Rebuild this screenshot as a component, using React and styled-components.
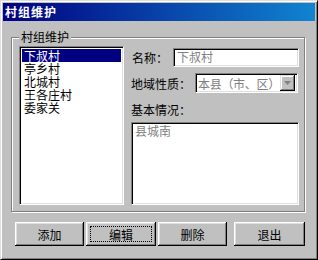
import React from "react";
import styled, { createGlobalStyle, css } from "styled-components";

const Global = createGlobalStyle`
  html, body { margin: 0; padding: 0; background: #c0c0c0; }
  * { box-sizing: border-box; }
  body { font-family: "Noto Sans CJK SC", "Noto Sans", sans-serif; font-size: 12px; }
`;

const sunken = css`
  border: 1px solid;
  border-color: #808080 #ffffff #ffffff #808080;
  box-shadow: inset 1px 1px 0 #000000, inset -1px -1px 0 #dfdfdf;
`;

const Window = styled.div`
  width: 318px;
  height: 260px;
  background: #c0c0c0;
  border: 1px solid;
  border-color: #dfdfdf #000000 #000000 #dfdfdf;
  box-shadow: inset 1px 1px 0 #ffffff, inset -1px -1px 0 #808080;
  padding: 2px;
  display: flex;
  flex-direction: column;
`;

const TitleBar = styled.div`
  height: 18px;
  background: linear-gradient(90deg, #000080 0%, #1084d0 100%);
  color: #ffffff;
  font-weight: bold;
  font-size: 12px;
  letter-spacing: 1px;
  line-height: 18px;
  padding-left: 2px;
  white-space: nowrap;
`;

const Body = styled.div`
  display: flex;
  flex-direction: column;
  padding: 16px 10px 0 8px;
`;

const GroupBox = styled.div`
  position: relative;
  width: 294px;
  height: 175px;
  border: 1px solid #808080;
  box-shadow: 1px 1px 0 #ffffff, inset 1px 1px 0 #ffffff;
  padding: 8px 5px 6px 7px;
  display: flex;
  gap: 7px;
`;

const Legend = styled.span`
  position: absolute;
  top: -9px;
  left: 7px;
  padding: 0 2px;
  background: #c0c0c0;
  line-height: 16px;
  color: #000;
  white-space: nowrap;
`;

const ListBox = styled.div`
  ${sunken};
  width: 105px;
  background: #ffffff;
  padding: 2px;
  display: flex;
  flex-direction: column;
`;

const ListItem = styled.div`
  height: 13px;
  line-height: 13px;
  padding-left: 2px;
  white-space: nowrap;
  color: ${(p) => (p.$selected ? "#ffffff" : "#000000")};
  background: ${(p) => (p.$selected ? "#000080" : "transparent")};
`;

const RightCol = styled.div`
  flex: 1;
  display: flex;
  flex-direction: column;
`;

const FieldRow = styled.div`
  display: flex;
  align-items: center;
  height: ${(p) => p.$h}px;
  margin-top: ${(p) => p.$mt}px;
  padding-left: ${(p) => p.$pl || 0}px;
  padding-right: ${(p) => p.$pr || 0}px;
`;

const Label = styled.span`
  width: ${(p) => p.$w}px;
  flex: none;
  white-space: nowrap;
  color: #000;
`;

const TextBox = styled.div`
  ${sunken};
  flex: 1;
  height: 100%;
  background: #ffffff;
  color: #808080;
  padding: 0 3px;
  line-height: 15px;
  white-space: nowrap;
`;

const Combo = styled.div`
  ${sunken};
  flex: 1;
  height: 100%;
  background: #ffffff;
  color: #808080;
  padding: 2px;
  display: flex;
  align-items: center;
  white-space: nowrap;
`;

const ComboText = styled.span`
  flex: 1;
  letter-spacing: -0.3px;
  overflow: hidden;
`;

const DropButton = styled.div`
  width: 15px;
  height: 16px;
  flex: none;
  background: #c0c0c0;
  box-shadow: inset -1px -1px 0 #000000, inset 1px 1px 0 #dfdfdf, inset -2px -2px 0 #808080, inset 2px 2px 0 #ffffff;
  display: flex;
  align-items: center;
  justify-content: center;
`;

const SectionLabel = styled.div`
  margin-top: 10px;
  height: 14px;
  line-height: 14px;
  white-space: nowrap;
`;

const TextArea = styled.div`
  ${sunken};
  margin-top: 5px;
  flex: 1;
  background: #ffffff;
  color: #808080;
  padding: 1px 3px;
  line-height: 14px;
`;

const ButtonRow = styled.div`
  display: flex;
  margin-top: 10px;
  margin-left: 4px;
  gap: 2px;
`;

const Button = styled.div`
  width: ${(p) => p.$w}px;
  height: 24px;
  margin-left: ${(p) => p.$ml || 0}px;
  background: #c0c0c0;
  box-shadow: inset -1px -1px 0 #000000, inset 1px 1px 0 #ffffff, inset -2px -2px 0 #808080, inset 2px 2px 0 #dfdfdf;
  display: flex;
  align-items: center;
  justify-content: center;
  position: relative;
  color: #000;
  white-space: nowrap;
  ${(p) =>
    p.$focused &&
    css`
      &::after {
        content: "";
        position: absolute;
        inset: 4px;
        border: 1px dotted #000;
      }
    `}
`;

const items = ["下叔村", "亭乡村", "北城村", "王各庄村", "委家关"];

export default function App() {
  return (
    <>
      <Global />
      <Window>
        <TitleBar>村组维护</TitleBar>
        <Body>
          <GroupBox>
            <Legend>村组维护</Legend>
            <ListBox>
              {items.map((t, i) => (
                <ListItem key={t} $selected={i === 0}>
                  {t}
                </ListItem>
              ))}
            </ListBox>
            <RightCol>
              <FieldRow $h={19} $mt={2} $pl={1}>
                <Label $w={41}>名称：</Label>
                <TextBox>下叔村</TextBox>
              </FieldRow>
              <FieldRow $h={20} $mt={6} $pr={1}>
                <Label $w={64}>地域性质：</Label>
                <Combo>
                  <ComboText>本县（市、区）</ComboText>
                  <DropButton>
                    <svg width="7" height="4" viewBox="0 0 7 4">
                      <polygon points="0,0 7,0 3.5,4" fill="#808080" />
                    </svg>
                  </DropButton>
                </Combo>
              </FieldRow>
              <SectionLabel>基本情况：</SectionLabel>
              <TextArea>县城南</TextArea>
            </RightCol>
          </GroupBox>
          <ButtonRow>
            <Button $w={69}>添加</Button>
            <Button $w={70} $focused>编辑</Button>
            <Button $w={69}>删除</Button>
            <Button $w={71} $ml={5}>退出</Button>
          </ButtonRow>
        </Body>
      </Window>
    </>
  );
}
